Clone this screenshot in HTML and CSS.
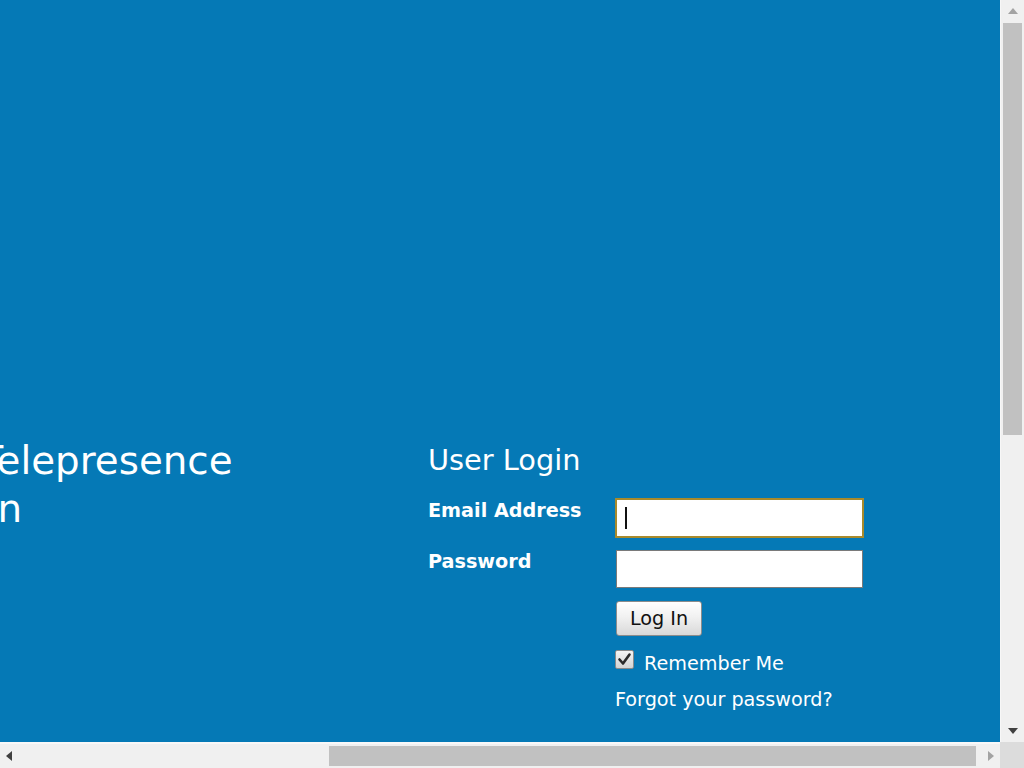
FILE: index.html
```html
<!DOCTYPE html>
<html lang="en">
<head>
<meta charset="utf-8">
<title>User Login</title>
<link rel="stylesheet" href="styles.css">
</head>
<body>
<div class="window">
  <div class="viewport">
    <div class="page">
      <div class="brand">
        <h1>Cisco Telepresence<br>Solution</h1>
      </div>
      <div class="login">
        <h2>User Login</h2>
        <form class="form">
          <label class="label" for="email">Email Address</label>
          <div class="field focused">
            <span class="caret"></span>
            <input id="email" type="text" name="email">
          </div>
          <label class="label" for="password">Password</label>
          <div class="field">
            <input id="password" type="password" name="password">
          </div>
          <div class="cell">
            <button type="button" class="btn">Log In</button>
          </div>
          <div class="cell remember">
            <span class="check">
              <svg width="15" height="15" viewBox="0 0 15 15"><path d="M2.5 7.5 L6 11.5 L12.5 2.5" fill="none" stroke="#2a2a2a" stroke-width="2.6" stroke-linecap="round" stroke-linejoin="round"/></svg>
            </span>
            <span class="remember-text">Remember Me</span>
          </div>
          <div class="cell">
            <a class="forgot" href="#">Forgot your password?</a>
          </div>
        </form>
      </div>
    </div>
  </div>
  <div class="vbar">
    <div class="arrow-box v"><span class="tri up disabled"></span></div>
    <div class="vtrack"><div class="vthumb"></div></div>
    <div class="arrow-box v"><span class="tri down"></span></div>
  </div>
  <div class="hbar">
    <div class="arrow-box h"><span class="tri left"></span></div>
    <div class="htrack"><div class="hthumb"></div></div>
    <div class="arrow-box h"><span class="tri right disabled"></span></div>
  </div>
  <div class="corner"></div>
</div>
</body>
</html>
```
FILE: styles.css
```css
html, body {
  margin: 0;
  padding: 0;
  height: 100%;
  overflow: hidden;
}

body {
  font-family: "DejaVu Sans", "Verdana", sans-serif;
  font-size: 19.2px;
  color: #ffffff;
}

.window {
  display: grid;
  grid-template-columns: 1fr 24px;
  grid-template-rows: 1fr 26px;
  width: 1024px;
  height: 768px;
}

.viewport {
  background: #0579b6;
  overflow: hidden;
  min-width: 0;
  min-height: 0;
}

.page {
  display: flex;
  width: max-content;
  margin-left: -136px;
  padding-top: 437px;
}

.brand {
  width: 564px;
  flex: none;
}

.brand h1 {
  margin: 0;
  font-size: 38.8px;
  line-height: 48px;
  font-weight: normal;
  white-space: nowrap;
}

.login {
  padding-top: 7px;
  width: 460px;
}

.login h2 {
  margin: 0;
  font-size: 28.8px;
  font-weight: normal;
  line-height: 33px;
}

.form {
  margin-top: 22px;
  display: grid;
  grid-template-columns: 188px 247px;
  row-gap: 13px;
  align-items: start;
}

.label {
  font-weight: bold;
  line-height: 22px;
  padding-top: 1px;
}

.field {
  display: flex;
  align-items: center;
  box-sizing: border-box;
  height: 38px;
  background: #ffffff;
  border: 1px solid #7a7a7a;
  padding: 0 6px;
}

.field.focused {
  border-color: #a88a2c;
  box-shadow: 0 0 0 1px #a88a2c;
  padding-left: 8px;
}

.caret {
  width: 2px;
  height: 22px;
  background: #111;
  flex: none;
}

.field input {
  flex: 1;
  min-width: 0;
  border: none;
  outline: none;
  background: transparent;
  font: inherit;
  color: #000;
  padding: 0;
}

.cell {
  grid-column: 2;
}

.btn {
  font-family: inherit;
  font-size: 19.2px;
  line-height: 22px;
  color: #111;
  padding: 6px 13px 5px;
  border: 1px solid #8c8c8c;
  border-radius: 3px;
  background: linear-gradient(#ffffff, #f1f1f1 45%, #d9d9d9);
  box-shadow: inset 0 1px 0 #ffffff;
}

.remember {
  display: flex;
  align-items: flex-start;
  margin-left: -1px;
}

.check {
  box-sizing: border-box;
  width: 19px;
  height: 19px;
  margin-top: 1px;
  border: 1px solid #8a8a8a;
  border-radius: 2px;
  background: linear-gradient(#f4f4f4, #d4d4d4);
  display: flex;
  align-items: center;
  justify-content: center;
  margin-right: 10px;
}

.remember-text {
  line-height: 22px;
  margin-top: 4px;
}

.forgot {
  display: inline-block;
  margin-left: -1px;
  padding-top: 1px;
  color: #ffffff;
  text-decoration: none;
  line-height: 22px;
}

/* scrollbars */
.vbar {
  background: #f0f0f0;
  display: flex;
  flex-direction: column;
  border-left: 1px solid #f7f7f7;
}

.hbar {
  background: #f0f0f0;
  display: flex;
  border-top: 2px solid #f8f8f8;
}

.corner {
  background: #dcdcdc;
}

.arrow-box {
  display: flex;
  align-items: center;
  justify-content: center;
  flex: none;
}

.arrow-box.v {
  height: 22px;
}

.arrow-box.h {
  width: 18px;
}

.vtrack {
  flex: 1;
  padding: 1px 2px 0 2px;
}

.vthumb {
  height: 412px;
  background: #c1c1c1;
}

.htrack {
  flex: 1;
  display: flex;
  padding: 2px 6px 2px 0;
}

.hthumb {
  width: 647px;
  margin-left: auto;
  background: #c1c1c1;
}

.tri {
  width: 0;
  height: 0;
  border-style: solid;
}

.tri.up {
  border-width: 0 5px 6px 5px;
  border-color: transparent transparent #505050 transparent;
}

.tri.down {
  border-width: 6px 5px 0 5px;
  border-color: #404040 transparent transparent transparent;
}

.tri.left {
  border-width: 5px 6px 5px 0;
  border-color: transparent #404040 transparent transparent;
}

.tri.right {
  border-width: 5px 0 5px 6px;
  border-color: transparent transparent transparent #404040;
}

.tri.up.disabled {
  border-bottom-color: #a3a3a3;
}

.tri.right.disabled {
  border-left-color: #a3a3a3;
}
```
